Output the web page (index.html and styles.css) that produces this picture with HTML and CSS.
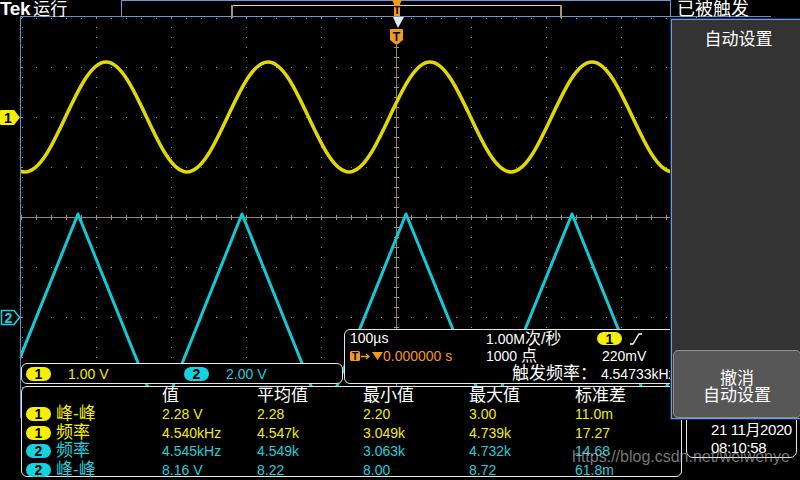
FILE: index.html
```html
<!DOCTYPE html>
<html lang="zh-CN">
<head>
<meta charset="utf-8">
<title>Tek</title>
<link rel="stylesheet" href="styles.css">
</head>
<body>
<div class="screen">
  <svg class="scope" width="800" height="480" viewBox="0 0 800 480">
    <defs>
      <clipPath id="grat"><rect x="21" y="17" width="750" height="401"/></clipPath>
    </defs>
    <path class="vdots" d="M96.5 17V418M171.5 17V418M246.5 17V418M321.5 17V418M471.5 17V418M546.5 17V418M621.5 17V418M696.5 17V418M22.5 17V418"/>
    <path class="hdots" d="M21 67.5H771M21 117.5H771M21 167.5H771M21 267.5H771M21 317.5H771M21 367.5H771M21 18.5H771"/>
    <path class="axis" d="M396.5 45V417M21 217.5H771"/>
    <path class="vticks" d="M396.5 47V418"/>
    <path class="hticks" d="M21 217.5H771"/>
    <path class="frame" d="M20.5 16V418M20 16.5H771"/>
    <g clip-path="url(#grat)">
      <path class="ch1" d="M-56,62 C-26.5,62 -4.5,172 25,172 S76.5,62 106,62 S157.5,172 187,172 S238.5,62 268,62 S319.5,172 349,172 S400.5,62 430,62 S481.5,172 511,172 S562.5,62 592,62 S643.5,172 673,172 S724.5,62 754,62 S805.5,172 835,172"/>
      <polyline class="ch2" points="-4.25,418 78,214 160.25,418 242,214 324,418 406,214 489,418 572,214 654,418 736,214 818,418"/>
    </g>
    <path class="gnd1" d="M1 110H14L20 117.5L14 125H1Q0 125 0 124V111Q0 110 1 110Z"/>
    <text class="gnd-t dark" x="8" y="122.5">1</text>
    <path class="gnd2" d="M1.5 310.5H14L19.5 317.5L14 324.5H1.5Z"/>
    <text class="gnd-t cyan" x="8.5" y="322.5">2</text>
    <polygon class="tpos" points="393,17 404,17 398,28"/>
    <path class="tmark" d="M391 29H402Q403 29 403 30V40L396.5 45L390 40V30Q390 29 391 29Z"/>
    <text class="tmark-t" x="396.5" y="41">T</text>
  </svg>

  <div class="hud">
    <header class="topbar">
      <div class="brand"><b>Tek</b>运行</div>
      <div class="record">
        <div class="window"></div>
        <svg class="rec-mark" width="10" height="17" viewBox="0 0 10 17">
          <path d="M0 0H10L8 4V16H2V4Z" fill="#f39a1b"/>
          <text x="5" y="14">T</text>
        </svg>
      </div>
      <div class="status">已被触发</div>
    </header>

    <div class="main">
      <div class="left">
        <div class="readouts">
          <div class="box chbar">
            <div class="chset y"><span class="pill py">1</span>1.00 V</div>
            <div class="chset c"><span class="pill pc">2</span>2.00 V</div>
          </div>
          <div class="box acq">
            <div class="arow">
              <span>100µs</span>
              <span>1.00M<span class="cj">次/秒</span></span>
              <span class="c3"><span class="pill py sm">1</span><svg class="slope" width="12" height="12" viewBox="0 0 12 12"><polyline points="0,11 3,11 9,1 12,1"/></svg></span>
            </div>
            <div class="arow">
              <span class="trig"><svg class="trig-icon" width="33" height="12" viewBox="0 0 33 12"><rect x="0" y="1" width="10" height="10" rx="1.5"/><text x="5" y="10">T</text><path d="M11 6.5H18M16 4L19 6.5L16 9" class="arr"/><polygon points="22,2 33,2 27.5,10"/></svg>0.000000 s</span>
              <span>1000 <span class="cj">点</span></span>
              <span class="c3 volt">220mV</span>
            </div>
            <div class="freq"><span class="cjl">触发频率：</span> 4.54733kHz</div>
          </div>
        </div>
        <div class="box meas">
          <div class="mrow head"><span></span><span></span><span>值</span><span>平均值</span><span>最小值</span><span>最大值</span><span>标准差</span></div>
          <div class="mrow y"><span class="pill py">1</span><span class="lbl">峰-峰</span><span>2.28 V</span><span>2.28</span><span>2.20</span><span>3.00</span><span>11.0m</span></div>
          <div class="mrow y"><span class="pill py">1</span><span class="lbl">频率</span><span>4.540kHz</span><span>4.547k</span><span>3.049k</span><span>4.739k</span><span>17.27</span></div>
          <div class="mrow c"><span class="pill pc">2</span><span class="lbl">频率</span><span>4.545kHz</span><span>4.549k</span><span>3.063k</span><span>4.732k</span><span>14.68</span></div>
          <div class="mrow c"><span class="pill pc">2</span><span class="lbl">峰-峰</span><span>8.16 V</span><span>8.22</span><span>8.00</span><span>8.72</span><span>61.8m</span></div>
        </div>
      </div>

      <div class="right">
        <div class="menu">
          <div class="menu-title">自动设置</div>
          <div class="undo"><span>撤消</span><span>自动设置</span></div>
        </div>
        <div class="clock">21 11月2020<br>08:10:58</div>
      </div>
    </div>
  </div>

  <div class="watermark">https://blog.csdn.net/weiwenye</div>
</div>
</body>
</html>
```

FILE: styles.css
```css
* { box-sizing: border-box; margin: 0; padding: 0; }
html, body { background: #000; }
body {
  width: 800px;
  height: 480px;
  overflow: hidden;
  font-family: "Liberation Sans", "Noto Sans CJK SC", sans-serif;
  color: #fff;
}
.screen { position: relative; width: 800px; height: 480px; overflow: hidden; }

/* ---------- scope canvas ---------- */
.scope { position: absolute; left: 0; top: 0; }
.scope .vdots { stroke: #9a8a5e; stroke-width: 1; stroke-dasharray: 1 9; fill: none; }
.scope .hdots { stroke: #9a8a5e; stroke-width: 1; stroke-dasharray: 1 14; fill: none; }
.scope .axis { stroke: #8d8779; stroke-width: 1; fill: none; }
.scope .vticks { stroke: #a49262; stroke-width: 5; stroke-dasharray: 1 9; fill: none; }
.scope .hticks { stroke: #a49262; stroke-width: 5; stroke-dasharray: 1 14; fill: none; }
.scope .frame { stroke: #5b8fd0; stroke-width: 1; fill: none; }
.scope .ch1 { stroke: #e0d800; stroke-width: 3.5; fill: none; }
.scope .ch2 { stroke: #12c9d6; stroke-width: 3; fill: none; stroke-linejoin: round; }
.scope .gnd1 { fill: #f4ee00; }
.scope .gnd2 { fill: #000; stroke: #14d2df; stroke-width: 1.5; }
.scope .gnd-t { font: bold 14px "Liberation Sans", sans-serif; text-anchor: middle; }
.scope .gnd-t.dark { fill: #000; }
.scope .gnd-t.cyan { fill: #14d2df; }
.scope .tpos { fill: #e6e8f2; }
.scope .tmark { fill: #f39a1b; }
.scope .tmark-t { font: bold 12px "Liberation Sans", sans-serif; fill: #000; text-anchor: middle; }

/* ---------- HUD ---------- */
.hud {
  position: relative;
  display: grid;
  grid-template-rows: 17px 463px;
  width: 800px;
  height: 480px;
}
.topbar { display: flex; height: 17px; }
.brand { width: 121px; font-size: 17px; line-height: 18px; white-space: nowrap; }
.brand b { font-size: 19px; letter-spacing: -0.4px; margin-right: 3px; }
.record { position: relative; width: 550px; height: 17px; border: 1px solid #6b98d4; }
.window {
  margin: 1px 0 0 109px;
  width: 331px;
  height: 13px;
  border-left: 2px solid #a69670;
  border-right: 2px solid #a69670;
}
.window::before { content: ""; display: block; margin-top: 4px; height: 1px; background: #f2ec00; }
.rec-mark { position: absolute; left: 270px; top: -1px; }
.rec-mark text { font: bold 10px "Liberation Sans", sans-serif; fill: #000; text-anchor: middle; }
.status { font-size: 18px; line-height: 18px; padding-left: 6px; white-space: nowrap; }

.main { display: grid; grid-template-columns: 670px 130px; }

.left {
  display: flex;
  flex-direction: column;
  justify-content: flex-end;
  padding: 0 0 3px 21px;
}
.readouts { display: flex; align-items: flex-end; gap: 1px; }
.box { border: 1px solid #e6e6e6; border-radius: 6px; background: #000; }

.y { color: #f4ee00; }
.c { color: #1ccfdc; }

.pill {
  display: inline-flex;
  justify-content: center;
  align-items: center;
  width: 25px;
  height: 14px;
  border-radius: 7px;
  color: #000;
  font-weight: bold;
  font-size: 14px;
  line-height: 14px;
}
.pill.sm { height: 13px; }
.py { background: #f6ef00; }
.pc { background: #14d2df; }

.chbar { width: 322px; height: 21px; display: flex; align-items: center; padding-left: 4px; }
.chset { display: flex; align-items: center; width: 160px; font-size: 14px; line-height: 16px; white-space: nowrap; }
.chset .pill { margin-right: 17px; }

.acq { width: 340px; height: 55px; padding-left: 5px; font-size: 14px; line-height: 17.5px; }
.arow {
  display: grid;
  grid-template-columns: 136px 111px 1fr;
  grid-template-rows: 17.5px;
  height: 17.5px;
  align-items: center;
  white-space: nowrap;
}
.cj { font-size: 16px; }
.c3 { display: flex; align-items: center; gap: 8px; }
.volt { padding-left: 5px; }
.slope polyline { fill: none; stroke: #fff; stroke-width: 1.3; }
.trig { display: flex; align-items: center; color: #f49a1a; }
.trig-icon { fill: #f49a1a; }
.trig-icon text { font: bold 10px "Liberation Sans", sans-serif; fill: #000; text-anchor: middle; }
.trig-icon .arr { fill: none; stroke: #f49a1a; stroke-width: 1.3; }
.freq { height: 17.5px; padding-left: 162px; white-space: nowrap; font-size: 14px; }
.cjl { font-size: 17px; }

.meas { margin-top: 2px; width: 661px; height: 91px; padding-left: 4px; line-height: 18.5px; }
.mrow {
  display: grid;
  grid-template-columns: 30px 106px 95px 106px 106px 106px 1fr;
  grid-template-rows: 18.5px;
  height: 18.5px;
  align-items: center;
  font-size: 14px;
  white-space: nowrap;
}
.mrow.head { height: 18px; grid-template-rows: 18px; line-height: 18px; font-size: 17px; }
.lbl { font-size: 17px; }

.right { display: flex; flex-direction: column; }
.menu {
  position: relative;
  z-index: 2;
  margin-top: 1px;
  height: 402px;
  background: #333;
  border: 1px solid #172c66;
  border-right: 0;
  box-shadow: inset 1px 1px 0 #6e9ad6, inset 0 -1px 0 #6e9ad6;
  display: flex;
  flex-direction: column;
}
.menu-title { font-size: 17px; line-height: 20px; text-align: center; padding: 11px 0 0 6px; }
.undo {
  margin: auto 0 1px 2px;
  width: 128px;
  height: 68px;
  background: #575757;
  border: 1px solid #8d8d8d;
  border-radius: 5px;
  display: flex;
  flex-direction: column;
  justify-content: center;
  align-items: center;
  font-size: 17px;
  line-height: 17px;
  padding-top: 5px;
}
.clock {
  margin: -15px 3px 0 16px;
  height: 53px;
  border: 1px solid #e6e6e6;
  border-radius: 7px;
  padding: 15px 0 0 24px;
  font-size: 15px;
  line-height: 18px;
  letter-spacing: -0.4px;
  white-space: nowrap;
}

.watermark {
  position: absolute;
  left: 572px;
  top: 448px;
  z-index: 3;
  font-size: 16px;
  line-height: 18px;
  color: rgba(200, 200, 200, 0.6);
  white-space: nowrap;
}
```
